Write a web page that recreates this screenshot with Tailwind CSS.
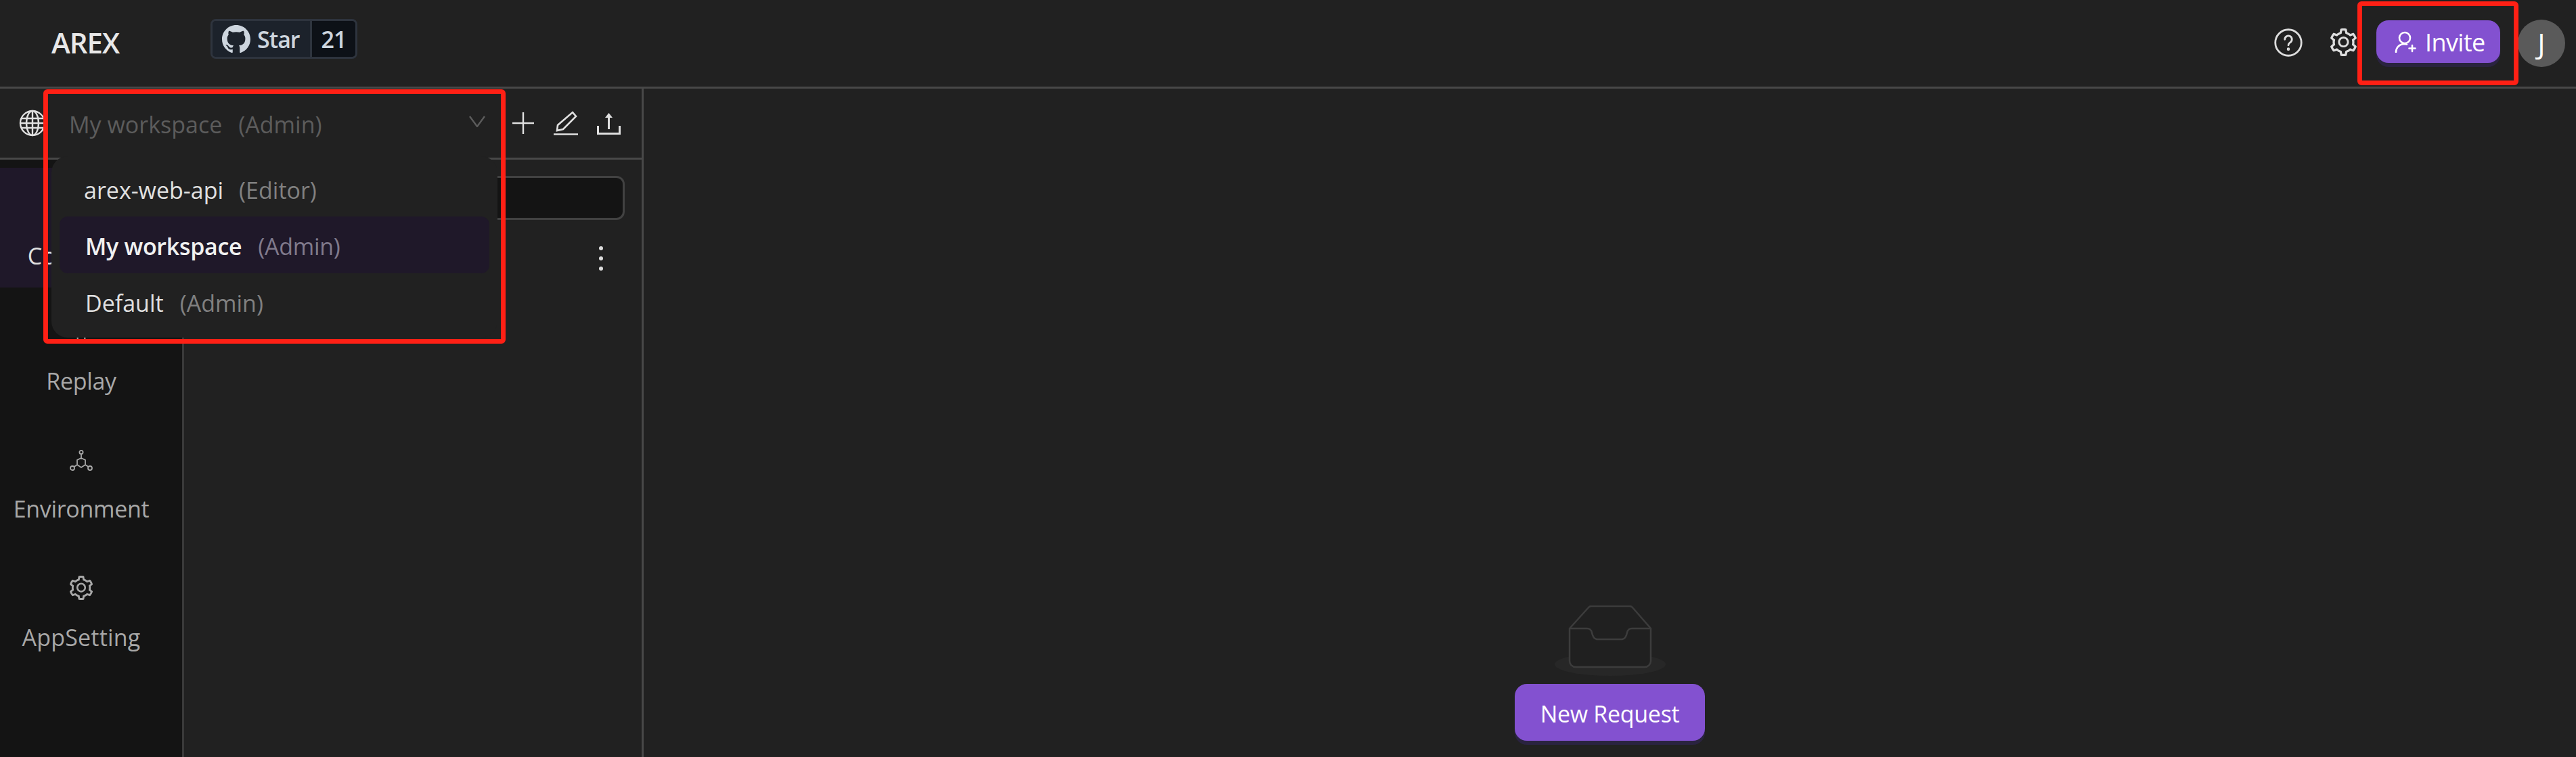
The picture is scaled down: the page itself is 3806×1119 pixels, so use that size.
<!DOCTYPE html>
<html lang="en">
<head>
<meta charset="utf-8">
<title>AREX</title>
<script src="https://cdn.jsdelivr.net/npm/@tailwindcss/browser@4"></script>
</head>
<body class="m-0 bg-[#212121] overflow-hidden font-['Open_Sans','Noto_Sans',sans-serif]">
<div class="relative w-[3806px] h-[1119px] overflow-hidden flex flex-col text-[#e6e6e6]">

  <header class="h-[131px] shrink-0 border-b-[3px] border-[#484848] flex items-center pl-[76px] pr-[16px]">
    <span class="text-[42px] leading-none font-semibold tracking-[-1px] text-[#e8e8e8] w-[235px] -mt-[2px]">AREX</span>
    <div class="flex h-[59px] w-[217px] -mt-[13px] rounded-[8px] overflow-hidden border-[3px] border-[#2e343e] text-[#cdd5de]">
      <div class="w-[147px] bg-[#1c222b] border-r-[3px] border-[#2e343e] flex items-center pl-[14px] gap-[10px]">
        <svg viewBox="0 0 16 16" class="w-[42px] h-[42px]" fill="currentColor"><path d="M8 0C3.58 0 0 3.58 0 8c0 3.54 2.29 6.53 5.47 7.59.4.07.55-.17.55-.38 0-.19-.01-.82-.01-1.49-2.01.37-2.53-.49-2.69-.94-.09-.23-.48-.94-.82-1.13-.28-.15-.68-.52-.01-.53.63-.01 1.08.58 1.23.82.72 1.21 1.87.87 2.33.66.07-.52.28-.87.51-1.07-1.78-.2-3.64-.89-3.64-3.95 0-.87.31-1.59.82-2.15-.08-.2-.36-1.02.08-2.12 0 0 .67-.21 2.2.82.64-.18 1.32-.27 2-.27.68 0 1.36.09 2 .27 1.53-1.04 2.2-.82 2.2-.82.44 1.1.16 1.92.08 2.12.51.56.82 1.27.82 2.15 0 3.07-1.87 3.75-3.65 3.95.29.25.54.73.54 1.48 0 1.07-.01 1.93-.01 2.2 0 .21.15.46.55.38A8.013 8.013 0 0016 8c0-4.42-3.58-8-8-8z"/></svg>
        <span class="text-[34px] leading-none font-semibold tracking-[-1px]">Star</span>
      </div>
      <div class="flex-1 bg-[#0d1117] flex items-center justify-center text-[34px] leading-none font-semibold tracking-[-1px]">21</div>
    </div>
    <div class="ml-auto flex items-center">
      <svg viewBox="0 0 24 24" class="w-[42px] h-[42px] text-[#dddddd] -mt-[3px]" fill="none" stroke="currentColor" stroke-width="1.6" stroke-linecap="round"><circle cx="12" cy="12" r="11"/><path d="M9 9.3a3 3 0 1 1 4.6 2.5c-1 .7-1.6 1.2-1.6 2.4"/><circle cx="12" cy="17.5" r=".5" fill="currentColor"/></svg>
      <svg viewBox="64 64 896 896" class="w-[41px] h-[41px] ml-[40px] mr-[28px] text-[#dddddd] -mt-[3px]" fill="currentColor"><path d="M924.8 625.7l-65.5-56c3.1-19 4.7-38.4 4.7-57.8s-1.6-38.8-4.7-57.8l65.5-56a32.03 32.03 0 009.3-35.2l-.9-2.6a443.74 443.74 0 00-79.7-137.9l-1.8-2.1a32.12 32.12 0 00-35.1-9.5l-81.3 28.9c-30-24.6-63.5-44-99.7-57.6l-15.7-85a32.05 32.05 0 00-25.8-25.7l-2.7-.5c-52.1-9.4-106.9-9.4-159 0l-2.7.5a32.05 32.05 0 00-25.8 25.7l-15.8 85.4a351.86 351.86 0 00-99 57.4l-81.9-29.1a32 32 0 00-35.1 9.5l-1.8 2.1a446.02 446.02 0 00-79.7 137.9l-.9 2.6c-4.5 12.5-.8 26.5 9.3 35.2l66.3 56.6c-3.1 18.8-4.6 38-4.6 57.1 0 19.2 1.5 38.4 4.6 57.1L99 625.5a32.03 32.03 0 00-9.3 35.2l.9 2.6c18.1 50.4 44.9 96.9 79.7 137.9l1.8 2.1a32.12 32.12 0 0035.1 9.5l81.9-29.1c29.8 24.5 63.1 43.9 99 57.4l15.8 85.4a32.05 32.05 0 0025.8 25.7l2.7.5a449.4 449.4 0 00159 0l2.7-.5a32.05 32.05 0 0025.8-25.7l15.7-85a350 350 0 0099.7-57.6l81.3 28.9a32 32 0 0035.1-9.5l1.8-2.1c34.8-41.1 61.6-87.5 79.7-137.9l.9-2.6c4.5-12.3.8-26.3-9.3-35zM788.3 465.9c2.5 15.1 3.8 30.6 3.8 46.1s-1.3 31-3.8 46.1l-6.6 40.1 74.7 63.9a370.03 370.03 0 01-42.6 73.6L721 702.8l-31.4 25.8c-23.9 19.6-50.5 35-79.3 45.8l-38.1 14.3-17.9 97a377.5 377.5 0 01-85 0l-17.9-97.2-37.8-14.5c-28.5-10.8-55-26.2-78.7-45.7l-31.4-25.9-93.4 33.2c-17-22.9-31.2-47.6-42.6-73.6l75.5-64.5-6.5-40c-2.4-14.9-3.7-30.3-3.7-45.5 0-15.3 1.2-30.6 3.7-45.5l6.5-40-75.5-64.5c11.3-26.1 25.6-50.7 42.6-73.6l93.4 33.2 31.4-25.9c23.7-19.5 50.2-34.9 78.7-45.7l37.9-14.3 17.9-97.2c28.1-3.2 56.8-3.2 85 0l17.9 97 38.1 14.3c28.7 10.8 55.4 26.2 79.3 45.8l31.4 25.8 92.8-32.9c17 22.9 31.2 47.6 42.6 73.6L781.8 426l6.5 39.9zM512 326c-97.2 0-176 78.8-176 176s78.8 176 176 176 176-78.8 176-176-78.8-176-176-176zm79.2 255.2A111.6 111.6 0 01512 614c-29.9 0-58-11.7-79.2-32.8A111.6 111.6 0 01400 502c0-29.9 11.7-58 32.8-79.2C454 401.6 482.1 390 512 390c29.9 0 58 11.6 79.2 32.8A111.6 111.6 0 01624 502c0 29.9-11.7 58-32.8 79.2z"/></svg>
      <button class="h-[63px] w-[183px] -mt-[5px] rounded-[18px] bg-[#8351d0] shadow-[0_6px_0_#2a2340] flex items-center pl-[27px] gap-[13px] text-white">
        <svg viewBox="0 0 32 32" class="w-[32px] h-[32px]" fill="none" stroke="currentColor" stroke-width="2.6" stroke-linecap="round"><circle cx="15" cy="10" r="8"/><path d="M2 31c0-6 4-11 11-12 2 0 4 0 5 .6M26 21v9M21.5 25.500h9"/></svg>
        <span class="text-[36px] leading-none tracking-[-0.6px] mt-[3px]">Invite</span>
      </button>
      <div class="ml-[26px] w-[70px] h-[70px] rounded-full bg-[#5a5a5a] flex items-center justify-center text-[42px] leading-none text-white">J</div>
    </div>
  </header>

  <div class="flex-1 flex min-h-0">
    <section class="w-[951px] shrink-0 border-r-[3px] border-[#484848] flex flex-col">
      <div class="h-[105px] shrink-0 border-b-[3px] border-[#484848] flex items-center pl-[28px] pr-[31px] text-[#e0e0e0]">
        <svg viewBox="0 0 40 40" class="w-[40px] h-[42px]" fill="none" stroke="currentColor" stroke-width="2.400"><circle cx="20" cy="20" r="18"/><ellipse cx="20" cy="20" rx="9" ry="18"/><path d="M20 2v36M3 13h34M3 27h34M2 20h36"/></svg>
        <svg viewBox="0 0 32 32" class="w-[32px] h-[34px] ml-auto mr-[29px]" fill="none" stroke="currentColor" stroke-width="2.400"><path d="M16 0v32M0 16h32"/></svg>
        <svg viewBox="0 0 36 36" class="w-[36px] h-[36px] mr-[28px]" fill="none" stroke="currentColor" stroke-width="2.600"><path d="M28 2l5 6-19 19-9 2 1-8zM0 34.500h36"/></svg>
        <svg viewBox="0 0 35 33" class="w-[35px] h-[33px]" fill="none" stroke="currentColor" stroke-width="3"><path d="M1.500 20v11.500h32V20M17.500 25V6"/><path d="M12 8l5.500-7 5.500 7z" fill="currentColor" stroke="none"/></svg>
      </div>
      <div class="flex-1 flex min-h-0">
        <nav class="w-[272px] shrink-0 bg-[#141414] border-r-[3px] border-[#3a3a3a] pt-[12px] flex flex-col gap-[12px] text-[#a8a8a8] text-[34px] leading-none tracking-[-0.3px]">
          <div class="h-[177px] w-[240px] rounded-r-[16px] bg-[#1f1829] flex flex-col items-center pt-[39px] gap-[40px] text-[#e0e0e0]">
            <svg viewBox="0 0 32 32" class="w-[34px] h-[34px]" fill="none" stroke="currentColor" stroke-width="2"><path d="M3 6h10l3 4h13v17H3z"/></svg>
            <span class="tracking-[0.2px]">Collection</span>
          </div>
          <div class="h-[177px] w-[240px] flex flex-col items-center pt-[39px] gap-[36px]">
            <svg viewBox="0 0 32 32" class="w-[34px] h-[34px]" fill="none" stroke="currentColor" stroke-width="2"><path d="M11 3v26M21 3v26M4 11h24"/></svg>
            <span>Replay</span>
          </div>
          <div class="h-[177px] w-[240px] flex flex-col items-center pt-[39px] gap-[38px]">
            <svg viewBox="0 0 34 32" class="w-[34px] h-[32px]" fill="none" stroke="currentColor" stroke-width="1.800"><circle cx="17" cy="3.500" r="2.600"/><circle cx="4" cy="27" r="3"/><circle cx="30" cy="27" r="3"/><path d="M17 6v8M11 15l6-3 6 3v7l-6 4-6-4zM11 22l-4.500 3M23 22l4.500 3"/></svg>
            <span>Environment</span>
          </div>
          <div class="h-[177px] w-[240px] flex flex-col items-center pt-[36px] gap-[38px]">
            <svg viewBox="64 64 896 896" class="w-[36px] h-[36px]" fill="currentColor"><path d="M924.8 625.7l-65.5-56c3.1-19 4.7-38.4 4.7-57.8s-1.6-38.8-4.7-57.8l65.5-56a32.03 32.03 0 009.3-35.2l-.9-2.6a443.74 443.74 0 00-79.7-137.9l-1.8-2.1a32.12 32.12 0 00-35.1-9.5l-81.3 28.9c-30-24.6-63.5-44-99.7-57.6l-15.7-85a32.05 32.05 0 00-25.8-25.7l-2.7-.5c-52.1-9.4-106.9-9.4-159 0l-2.7.5a32.05 32.05 0 00-25.8 25.7l-15.8 85.4a351.86 351.86 0 00-99 57.4l-81.9-29.1a32 32 0 00-35.1 9.5l-1.8 2.1a446.02 446.02 0 00-79.7 137.9l-.9 2.6c-4.5 12.5-.8 26.5 9.3 35.2l66.3 56.6c-3.1 18.8-4.6 38-4.6 57.1 0 19.2 1.5 38.4 4.6 57.1L99 625.5a32.03 32.03 0 00-9.3 35.2l.9 2.6c18.1 50.4 44.9 96.9 79.7 137.9l1.8 2.1a32.12 32.12 0 0035.1 9.5l81.9-29.1c29.8 24.5 63.1 43.9 99 57.4l15.8 85.4a32.05 32.05 0 0025.8 25.7l2.7.5a449.4 449.4 0 00159 0l2.7-.5a32.05 32.05 0 0025.8-25.7l15.7-85a350 350 0 0099.7-57.6l81.3 28.9a32 32 0 0035.1-9.5l1.8-2.1c34.8-41.1 61.6-87.5 79.7-137.9l.9-2.6c4.5-12.3.8-26.3-9.3-35zM788.3 465.9c2.5 15.1 3.8 30.6 3.8 46.1s-1.3 31-3.8 46.1l-6.6 40.1 74.7 63.9a370.03 370.03 0 01-42.6 73.6L721 702.8l-31.4 25.8c-23.9 19.6-50.5 35-79.3 45.8l-38.1 14.3-17.9 97a377.5 377.5 0 01-85 0l-17.9-97.2-37.8-14.5c-28.5-10.8-55-26.2-78.7-45.7l-31.4-25.9-93.4 33.2c-17-22.9-31.2-47.6-42.6-73.6l75.5-64.5-6.5-40c-2.4-14.9-3.7-30.3-3.7-45.5 0-15.3 1.2-30.6 3.7-45.5l6.5-40-75.5-64.5c11.3-26.1 25.6-50.7 42.6-73.6l93.4 33.2 31.4-25.9c23.7-19.5 50.2-34.9 78.7-45.7l37.9-14.3 17.9-97.2c28.1-3.2 56.8-3.2 85 0l17.9 97 38.1 14.3c28.7 10.8 55.4 26.2 79.3 45.8l31.4 25.8 92.8-32.9c17 22.9 31.2 47.6 42.6 73.6L781.8 426l6.5 39.9zM512 326c-97.2 0-176 78.8-176 176s78.8 176 176 176 176-78.8 176-176-78.8-176-176-176zm79.2 255.2A111.6 111.6 0 01512 614c-29.9 0-58-11.7-79.2-32.8A111.6 111.6 0 01400 502c0-29.9 11.7-58 32.8-79.2C454 401.6 482.1 390 512 390c29.9 0 58 11.6 79.2 32.8A111.6 111.6 0 01624 502c0 29.9-11.7 58-32.8 79.2z"/></svg>
            <span class="tracking-[0.2px]">AppSetting</span>
          </div>
        </nav>
        <div class="flex-1 pl-[16px] pr-[25px] pt-[24px]">
          <div class="h-[65px] rounded-[12px] bg-[#141414] border-[3px] border-[#424242]"></div>
          <div class="flex justify-end pr-[32px] pt-[39px]">
            <div class="flex flex-col gap-[9px]">
              <span class="w-[6px] h-[6px] rounded-full bg-[#dddddd]"></span>
              <span class="w-[6px] h-[6px] rounded-full bg-[#dddddd]"></span>
              <span class="w-[6px] h-[6px] rounded-full bg-[#dddddd]"></span>
            </div>
          </div>
        </div>
      </div>
    </section>
    <main class="flex-1 flex flex-col items-center justify-end pb-[24px]">
      <svg viewBox="0 0 164 104" class="w-[164px] h-[104px] mb-[12px]" fill="none">
        <ellipse cx="82" cy="87" rx="82" ry="17" fill="#272727"/>
        <path d="M22 34L50 3a6 6 0 0 1 5-2h55a6 6 0 0 1 5 2L142 34V82a9 9 0 0 1-9 9H31a9 9 0 0 1-9-9Z" fill="#202020" stroke="#3c3c3c" stroke-width="2.500"/>
        <path d="M22 34h26c4 0 6 2 7 6c1 6 3 9 7 10h38c4-1 6-4 7-10c1-4 3-6 7-6h28" stroke="#3c3c3c" stroke-width="2.500"/>
      </svg>
      <button class="h-[84px] w-[281px] rounded-[18px] bg-[#8351d0] shadow-[0_6px_0_#2a2340] text-white text-[34px] leading-none tracking-[-0.3px] pt-[4px]">New Request</button>
    </main>
  </div>

  <!-- workspace select, opened over the panes -->
  <div class="absolute left-[64px] top-[131px] w-[683px] h-[377px] bg-transparent">
    <div class="absolute inset-x-0 top-0 h-[102px] bg-[#212121] flex items-center pl-[38px] pr-[30px] pt-[3px] text-[34px] leading-none text-[#5c5c5c]">
      <span class="mr-[24px]">My workspace</span><span>(Admin)</span>
      <svg viewBox="0 0 24 17" class="ml-auto w-[24px] h-[17px] -mt-[9px]" fill="none" stroke="currentColor" stroke-width="2.400"><path d="M1 1l11 15L23 1"/></svg>
    </div>
    <div class="absolute left-[12px] right-[12px] top-[100px] h-[268px] rounded-[24px] bg-[#212121] pt-[9px] px-[12px] flex flex-col gap-0 text-[34px] leading-none text-[#e0e0e0]">
      <div class="h-[80px] flex items-center pl-[36px] pt-[2px]"><span class="mr-[23px]">arex-web-api</span><span class="text-[#808080]">(Editor)</span></div>
      <div class="h-[84px] rounded-[12px] bg-[#1f1829] flex items-center pl-[38px] pt-[3px] font-semibold text-[#f0f0f0] tracking-[-0.3px]"><span class="mr-[24px]">My workspace</span><span class="font-normal text-[#807a8c]">(Admin)</span></div>
      <div class="h-[84px] flex items-center pl-[38px] pt-[3px]"><span class="mr-[24px]">Default</span><span class="text-[#808080]">(Admin)</span></div>
    </div>
  </div>

  <!-- annotation rectangles -->
  <div class="absolute left-[64px] top-[132px] w-[683px] h-[376px] border-[7px] border-[#ff2015] rounded-[6px]"></div>
  <div class="absolute left-[3483px] top-[2px] w-[238px] h-[124px] border-[7px] border-[#ff2015] rounded-[6px]"></div>
</div>
</body>
</html>
